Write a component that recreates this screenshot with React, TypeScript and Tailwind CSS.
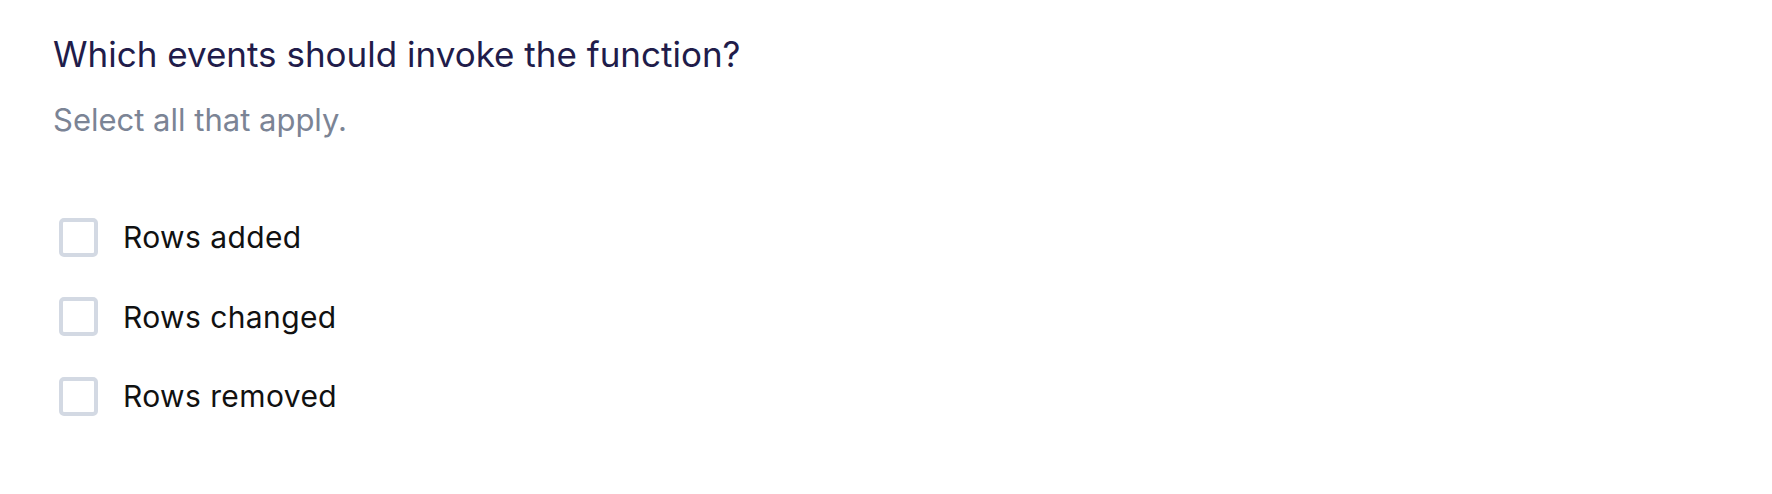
import React from 'react';

const events = ['Rows added', 'Rows changed', 'Rows removed'];

export default function App(): JSX.Element {
  return (
    <div className="min-h-screen bg-white pl-[53px] pt-[34px] font-['Inter',sans-serif]">
      <h1 className="text-[35px] leading-[40px] font-normal text-[#211c4a]">
        Which events should invoke the function?
      </h1>
      <p className="mt-[28px] text-[31px] leading-[36px] text-[#7b8495]">Select all that apply.</p>
      <ul className="mt-[79px] flex flex-col gap-[39.5px]">
        {events.map((label) => (
          <li key={label} className="flex items-center h-[40px]">
            <span className="ml-[6px] w-[39px] h-[39px] rounded-[5px] border-[4px] border-[#d3d9e3] bg-white" />
            <span className="ml-[25px] text-[30px] leading-[40px] tracking-[0.4px] text-[#111111]">{label}</span>
          </li>
        ))}
      </ul>
    </div>
  );
}
